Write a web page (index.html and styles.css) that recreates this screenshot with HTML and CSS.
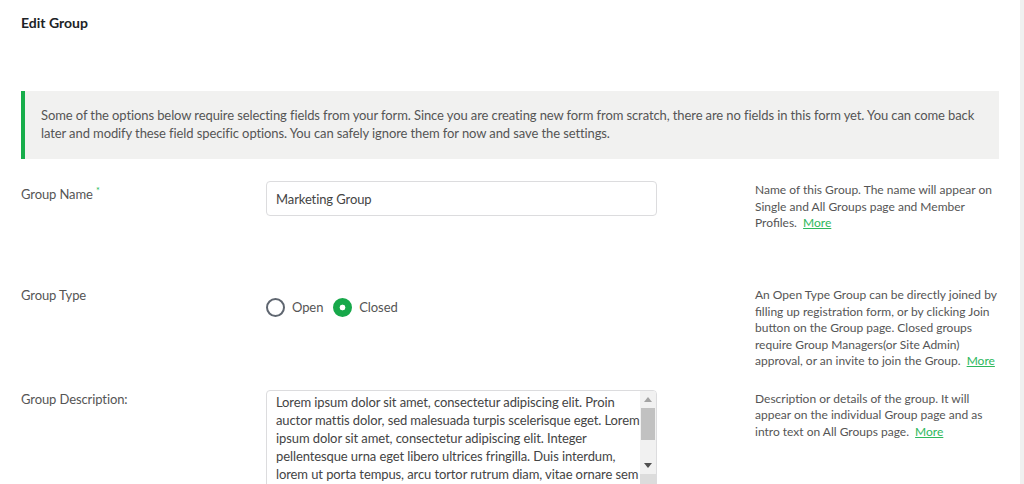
FILE: index.html
```html
<!DOCTYPE html>
<html lang="en">
<head>
<meta charset="utf-8">
<title>Edit Group</title>
<link rel="stylesheet" href="styles.css">
</head>
<body>
<div class="screen">
  <main class="page">
    <h1 class="title">Edit Group</h1>
    <div class="notice">Some of the options below require selecting fields from your form. Since you are creating new form from scratch, there are no fields in this form yet. You can come back later and modify these field specific options. You can safely ignore them for now and save the settings.</div>
    <form class="form">
      <div class="row row-name">
        <label class="label label-name" for="gname">Group Name <span class="req">*</span></label>
        <div class="field">
          <input class="text-input" id="gname" type="text" value="Marketing Group">
        </div>
        <p class="help">Name of this Group. The name will appear on Single and All Groups page and Member Profiles.&nbsp; <a class="more" href="#">More</a></p>
      </div>
      <div class="row row-type">
        <span class="label">Group Type</span>
        <div class="field radios">
          <label class="radio-option"><input class="radio" type="radio" name="gtype" value="open"> Open</label>
          <label class="radio-option"><input class="radio" type="radio" name="gtype" value="closed" checked> Closed</label>
        </div>
        <p class="help">An Open Type Group can be directly joined by filling up registration form, or by clicking Join button on the Group page. Closed groups require Group Managers(or Site Admin) approval, or an invite to join the Group.&nbsp; <a class="more" href="#">More</a></p>
      </div>
      <div class="row row-desc">
        <label class="label" for="gdesc">Group Description:</label>
        <div class="field">
          <div class="textarea-box">
            <textarea class="textarea" id="gdesc">Lorem ipsum dolor sit amet, consectetur adipiscing elit. Proin auctor mattis dolor, sed malesuada turpis scelerisque eget. Lorem ipsum dolor sit amet, consectetur adipiscing elit. Integer pellentesque urna eget libero ultrices fringilla. Duis interdum, lorem ut porta tempus, arcu tortor rutrum diam, vitae ornare sem nunc quis magna. Nullam aliquet ligula at lectus egestas, vel pulvinar nisl tincidunt.</textarea>
            <div class="scrollbar" aria-hidden="true">
              <div class="sb-btn">
                <svg width="8" height="5" viewBox="0 0 8 5"><path d="M0 5 L4 0 L8 5 Z" fill="#a3a3a3"/></svg>
              </div>
              <div class="sb-thumb"></div>
              <div class="sb-track"></div>
              <div class="sb-btn">
                <svg width="8" height="5" viewBox="0 0 8 5"><path d="M0 0 L8 0 L4 5 Z" fill="#505050"/></svg>
              </div>
              <div class="sb-corner"></div>
            </div>
          </div>
        </div>
        <p class="help">Description or details of the group. It will appear on the individual Group page and as intro text on All Groups page.&nbsp; <a class="more" href="#">More</a></p>
      </div>
    </form>
  </main>
  <div class="edge"></div>
</div>
</body>
</html>
```
FILE: styles.css
```css
html, body {
  margin: 0;
  padding: 0;
  background: #ffffff;
}

body {
  font-family: Lato, "Open Sans", "Noto Sans", sans-serif;
  font-size: 13px;
  letter-spacing: -0.1px;
  color: #555555;
}

.screen {
  display: flex;
  height: 484px;
  overflow: hidden;
}

.page {
  flex: 1;
  padding-left: 21px;
  min-width: 0;
}

.edge {
  width: 4px;
  background: #f0f0f0;
}

.title {
  margin: 0;
  padding-top: 14px;
  font-size: 14px;
  line-height: 18px;
  font-weight: 700;
  letter-spacing: 0;
  color: #1d2327;
}

.notice {
  margin-top: 59px;
  margin-right: 21px;
  padding: 15px 20px 17px 16px;
  border-left: 4px solid #17ad4a;
  background: #f1f1f0;
  line-height: 18px;
  color: #555555;
}

.form {
  margin-top: 22px;
}

.row {
  display: grid;
  grid-template-columns: 245px 391px 343px;
  align-items: start;
}

.row-name {
  min-height: 85px;
  margin-bottom: 20px;
}

.row-type {
  margin-bottom: 20px;
}

.label {
  line-height: 18px;
  color: #555555;
}

.label-name {
  padding-top: 1px;
}

.req {
  color: #1db954;
  font-size: 9px;
  vertical-align: 5px;
}

.help {
  margin: 0 0 0 98px;
  padding-top: 1px;
  font-size: 12px;
  letter-spacing: 0;
  line-height: 16.5px;
  color: #555555;
}

.more {
  color: #2eb85c;
  text-decoration: underline;
}

.text-input {
  box-sizing: border-box;
  width: 391px;
  height: 35px;
  margin: 0;
  padding: 0 9px;
  border: 1px solid #dcdcde;
  border-radius: 4px;
  font-family: inherit;
  font-size: 13px;
  letter-spacing: -0.1px;
  color: #444444;
  background: #ffffff;
  outline: none;
}

.radios {
  display: flex;
  align-items: center;
  padding-top: 12px;
}

.radio-option {
  display: inline-flex;
  align-items: center;
  gap: 7px;
  margin-right: 10px;
  line-height: 19px;
  color: #555555;
}

.radio {
  appearance: none;
  -webkit-appearance: none;
  box-sizing: border-box;
  width: 19px;
  height: 19px;
  margin: 0;
  border: 2px solid #5f6670;
  border-radius: 50%;
  background: #ffffff;
}

.radio:checked {
  border-color: #17a84a;
  background: radial-gradient(circle, #ffffff 0 2.6px, #17a84a 3.2px);
}

.textarea-box {
  box-sizing: border-box;
  display: flex;
  width: 391px;
  height: 102px;
  border: 1px solid #dcdcde;
  border-radius: 4px;
  overflow: hidden;
  background: #ffffff;
}

.textarea {
  flex: 1;
  min-width: 0;
  margin: 0;
  padding: 2px 0 0 9px;
  border: 0;
  resize: none;
  overflow: hidden;
  font-family: inherit;
  font-size: 13px;
  letter-spacing: -0.1px;
  line-height: 18px;
  color: #444444;
  background: transparent;
  outline: none;
}

.scrollbar {
  width: 16px;
  display: flex;
  flex-direction: column;
  background: #f1f1f1;
}

.sb-btn {
  height: 17px;
  display: flex;
  align-items: center;
  justify-content: center;
}

.sb-thumb {
  height: 32px;
  margin: 0 1px;
  background: #c1c1c1;
}

.sb-track {
  flex: 1;
}

.sb-corner {
  height: 17px;
  background: #dcdcdc;
}
```
